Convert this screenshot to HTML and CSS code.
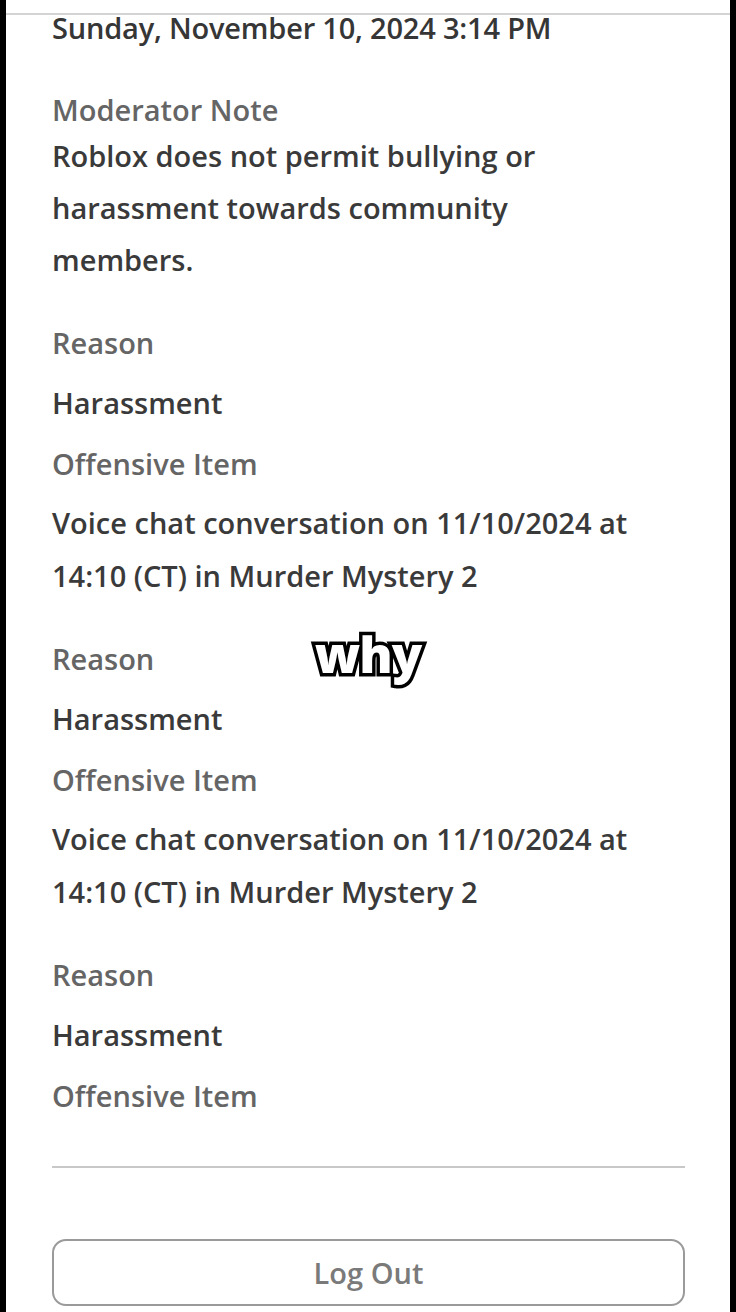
FILE: index.html
```html
<!DOCTYPE html>
<html>
<head>
<meta charset="utf-8">
<link rel="stylesheet" href="styles.css">
</head>
<body>
<div class="page">
  <div class="topbar"></div>
  <div class="content">
    <div class="date">Sunday, November 10, 2024 3:14 PM</div>
    <div class="label note-label">Moderator Note</div>
    <div class="value note">Roblox does not permit bullying or harassment towards community members.</div>

    <div class="item">
      <div class="label">Reason</div>
      <div class="value">Harassment</div>
      <div class="label">Offensive Item</div>
      <div class="value long">Voice chat conversation on 11/10/2024 at 14:10 (CT) in Murder Mystery 2</div>
    </div>
    <div class="item">
      <div class="label">Reason</div>
      <div class="value">Harassment</div>
      <div class="label">Offensive Item</div>
      <div class="value long">Voice chat conversation on 11/10/2024 at 14:10 (CT) in Murder Mystery 2</div>
    </div>
    <div class="item">
      <div class="label">Reason</div>
      <div class="value">Harassment</div>
      <div class="label">Offensive Item</div>
    </div>

    <hr class="divider">
    <button class="logout">Log Out</button>
  </div>
  <div class="caption">why</div>
</div>
</body>
</html>
```
FILE: styles.css
```css
html, body {
  margin: 0;
  padding: 0;
  background: #000;
}
.page {
  position: relative;
  margin: 0 6px;
  height: 1312px;
  background: #fff;
  overflow: hidden;
  font-family: "Open Sans", "Noto Sans", sans-serif;
}
.topbar {
  height: 13px;
  border-bottom: 2px solid #d4d4d4;
}
.content {
  padding: 0 45px 0 46px;
}
.date {
  font-size: 29px;
  font-weight: 600;
  color: #363636;
  line-height: 26px;
  letter-spacing: -0.2px;
}
.label {
  font-size: 29px;
  font-weight: 600;
  color: #656565;
  line-height: 52px;
}
.value {
  max-width: 590px;
  font-size: 29px;
  font-weight: 600;
  color: #3a3a3a;
  line-height: 53px;
  margin-top: 7.5px;
}
.value.long {
  margin-top: 6.5px;
}
.value + .label {
  margin-top: 8.5px;
}
.note-label {
  margin-top: 49px;
  line-height: 40px;
}
.note-label + .value {
  margin-top: 0;
  line-height: 52px;
}
.item {
  margin-top: 30.5px;
}
.divider {
  border: 0;
  border-top: 2px solid #c8c8c8;
  margin: 44px 0 0;
}
.logout {
  display: block;
  width: 100%;
  height: 67px;
  margin-top: 71px;
  background: #fff;
  border: 2px solid #9a9a9a;
  border-radius: 14px;
  font-family: "Open Sans", "Noto Sans", sans-serif;
  font-size: 29px;
  font-weight: 600;
  color: #7a7a7a;
}
.caption {
  position: absolute;
  left: 0;
  right: 0;
  top: 624px;
  text-align: center;
  font-family: "Open Sans", sans-serif;
  font-weight: 800;
  font-size: 50px;
  line-height: 60px;
  color: #fff;
  -webkit-text-stroke: 7px #000;
  paint-order: stroke fill;
  letter-spacing: -1px;
}
```
